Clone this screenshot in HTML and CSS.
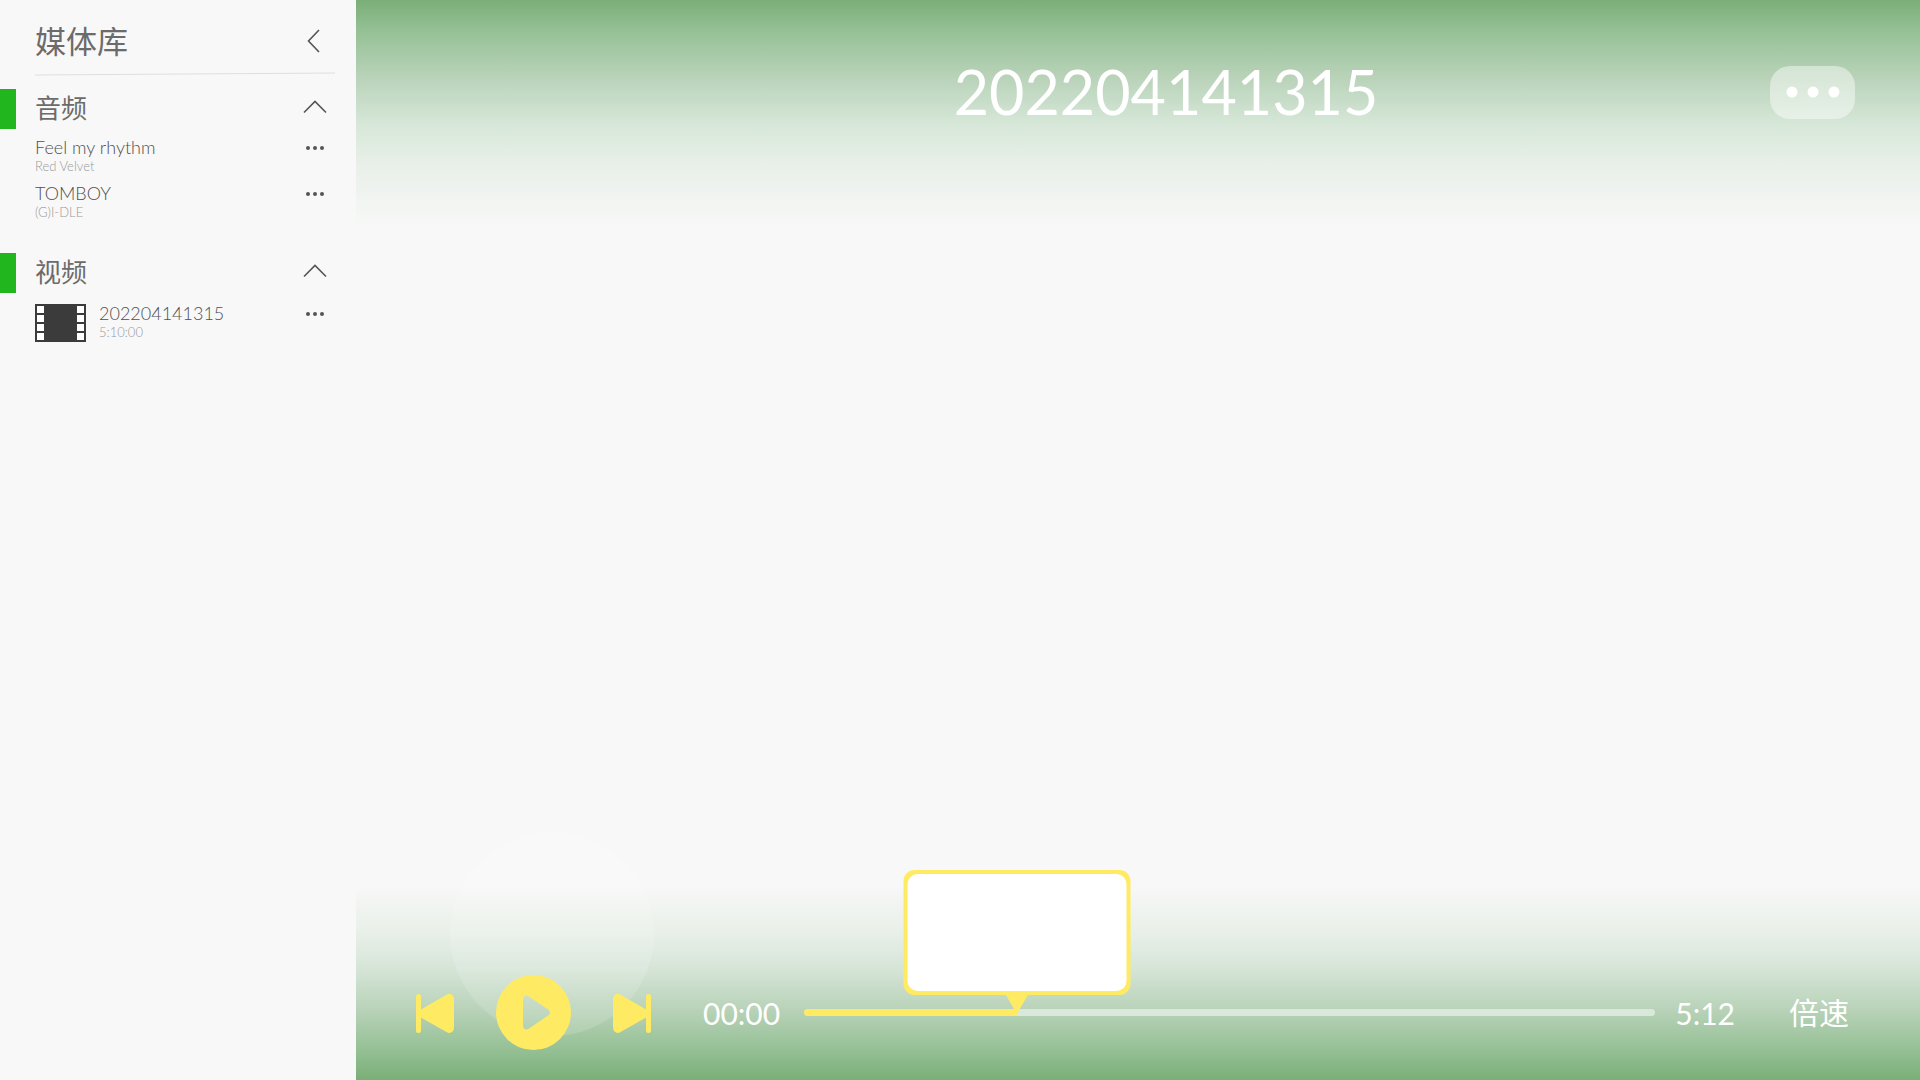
FILE: index.html
```html
<!DOCTYPE html>
<html lang="zh-CN">
<head>
<meta charset="utf-8">
<meta name="viewport" content="width=device-width, initial-scale=1">
<title>媒体库</title>
<link rel="stylesheet" href="styles.css">
</head>
<body>
<svg class="defs" aria-hidden="true">
  <symbol id="dots" viewBox="0 0 20 6"><circle cx="3" cy="3" r="2"/><circle cx="10" cy="3" r="2"/><circle cx="17" cy="3" r="2"/></symbol>
  <symbol id="up" viewBox="0 0 24 14"><path d="M1 12.5 12 1.500 23 12.5" fill="none" stroke="currentColor" stroke-width="1.600"/></symbol>
</svg>
<div class="app">
  <aside class="sidebar">
    <header class="library">
      <h2>媒体库</h2>
      <button class="icon back" aria-label="收起"><svg width="13" height="24" viewBox="0 0 13 24"><path d="M12 1 1.500 12 12 23" fill="none" stroke="currentColor" stroke-width="1.600"/></svg></button>
    </header>
    <svg class="divider" viewBox="0 0 300 4" preserveAspectRatio="none" aria-hidden="true"><path d="M0 3 300 1" stroke="#dedede" stroke-width="1"/></svg>
    <section class="group">
      <div class="group-head">
        <h3>音频</h3>
        <button class="icon" aria-label="折叠音频"><svg width="24" height="14"><use href="#up"/></svg></button>
      </div>
      <ul>
        <li>
          <div class="text"><span class="name">Feel my rhythm</span><span class="note">Red Velvet</span></div>
          <button class="icon more" aria-label="更多"><svg width="20" height="6"><use href="#dots"/></svg></button>
        </li>
        <li>
          <div class="text"><span class="name">TOMBOY</span><span class="note">(G)I-DLE</span></div>
          <button class="icon more" aria-label="更多"><svg width="20" height="6"><use href="#dots"/></svg></button>
        </li>
      </ul>
    </section>
    <section class="group videos">
      <div class="group-head">
        <h3>视频</h3>
        <button class="icon" aria-label="折叠视频"><svg width="24" height="14"><use href="#up"/></svg></button>
      </div>
      <ul>
        <li>
          <svg class="film" width="51" height="38" viewBox="0 0 51 38"><path fill="#3b3b3b" d="M0 0h51v38H0z"/><path fill="#fff" d="M2 2h7v7H2zM2 11h7v7H2zM2 20h7v7H2zM2 29h7v7H2zM42 2h7v7h-7zM42 11h7v7h-7zM42 20h7v7h-7zM42 29h7v7h-7z"/></svg>
          <div class="text"><span class="name">202204141315</span><span class="note">5:10:00</span></div>
          <button class="icon more" aria-label="更多"><svg width="20" height="6"><use href="#dots"/></svg></button>
        </li>
      </ul>
    </section>
  </aside>
  <main class="player">
    <header class="top">
      <h1>202204141315</h1>
      <button class="menu" aria-label="更多选项"><svg width="54" height="12" viewBox="0 0 54 12" fill="#fff"><circle cx="6" cy="6" r="5.500"/><circle cx="27" cy="6" r="5.500"/><circle cx="48" cy="6" r="5.500"/></svg></button>
    </header>
    <footer class="controls">
      <span class="glow"></span>
      <div class="buttons">
        <button class="icon" aria-label="上一个"><svg width="38" height="40" viewBox="0 0 38 40"><rect y="1" width="5" height="39" rx="2.500"/><path d="M4 17 31 1.500Q34-.2 36.800 2.500 38 4 38 6V34Q38 37 36.500 38.500 34 41 30.500 39L4 24Z"/></svg></button>
        <button class="icon" aria-label="播放"><svg width="75" height="75" viewBox="0 0 75 75"><path fill-rule="evenodd" d="M37.500 0a37.500 37.500 0 1 0 0 75a37.500 37.500 0 1 0 0-75ZM33 21.500 52.500 34.800Q55.500 37.500 52.500 40.200L33 53.500Q30.500 55 28.500 54 27 53 27 50.500V24.500Q27 22 28.500 21 30.500 20 33 21.500Z"/></svg></button>
        <button class="icon" aria-label="下一个"><svg width="38" height="40" viewBox="0 0 38 40"><g transform="matrix(-1 0 0 1 38 0)"><rect y="1" width="5" height="39" rx="2.500"/><path d="M4 17 31 1.500Q34-.2 36.800 2.500 38 4 38 6V34Q38 37 36.500 38.500 34 41 30.500 39L4 24Z"/></g></svg></button>
      </div>
      <span class="time elapsed">00:00</span>
      <div class="seek">
        <input type="range" min="0" max="100" value="25" aria-label="播放进度">
        <div class="preview"></div>
      </div>
      <span class="time total">5:12</span>
      <button class="speed">倍速</button>
    </footer>
  </main>
</div>
</body>
</html>
```
FILE: styles.css
```css
* { box-sizing: border-box; }
body { margin: 0; background: #f8f8f8; color: #6b6b6b; font-family: Lato, "Noto Sans CJK SC", sans-serif; }
h1, h2, h3, ul { margin: 0; padding: 0; font-weight: 400; }
button { margin: 0; padding: 0; border: 0; background: none; color: inherit; font: inherit; cursor: pointer; }
svg { display: block; }
.defs { position: absolute; width: 0; height: 0; }
.app { display: grid; grid-template-columns: 356px 1fr; min-height: 100vh; }

.library { display: flex; align-items: center; justify-content: space-between; height: 72px; padding: 10px 36px 0 35px; }
.library h2 { font-size: 31px; line-height: 48px; }
.icon { color: #555; fill: currentColor; }
.divider { width: calc(100% - 56px); height: 4px; margin-left: 35px; }
.group { padding-bottom: 24px; }
.group:first-of-type { padding-top: 13px; }
.group-head { display: flex; align-items: center; justify-content: space-between; height: 40px; padding: 0 29px 0 19px; border-left: 16px solid #22b61e; }
.group-head h3 { font-size: 26px; line-height: 38px; padding-bottom: 2px; }
.group-head .icon { margin-bottom: 5px; }
.group ul { list-style: none; padding-top: 8px; }
.group li { display: flex; align-items: flex-start; height: 46px; padding: 0 31px 0 35px; }
.text { display: flex; flex: 1; flex-direction: column; }
.name { color: #505050; font-size: 18px; font-weight: 300; line-height: 21px; }
.note { color: #999; font-size: 13px; font-weight: 300; line-height: 17px; }
.more { padding-top: 8px; }
.group.videos ul { padding-top: 10px; }
.film { margin: 1px 13px 0 0; }

.player {
  display: flex; flex-direction: column; justify-content: space-between; min-width: 0;
  background:
    linear-gradient(to bottom, #7aae77, #93bf93 28px, #b8d2b8 76px, #d6e7d8 124px, #e8efe8 162px, #f8f8f8 228px, transparent 228px),
    linear-gradient(to top, #7aae77, #93bf93 28px, #b8d2b8 70px, #d6e5d8 112px, #e8efe8 146px, #f8f8f8 196px);
}
.top { display: grid; grid-template-columns: 1fr auto 1fr; align-items: center; padding: 56px 65px 0 121px; color: #fff; }
.top h1 { grid-column: 2; font-size: 61px; line-height: 72px; }
.menu { display: flex; align-items: center; justify-content: center; justify-self: end; width: 85px; height: 53px; border-radius: 20px; background: rgba(255, 255, 255, .45); }

.controls { position: relative; display: flex; align-items: center; height: 135px; padding: 0 71px 0 60px; color: #fff; font-size: 30px; line-height: 44px; }
.glow { position: absolute; bottom: 44px; left: 94px; width: 204px; height: 204px; border-radius: 50%; background: rgba(255, 255, 255, .15); }
.buttons { position: relative; display: flex; align-items: center; gap: 42px; }
.buttons .icon { color: #ffeb63; }
.elapsed { margin: 0 24px 0 52px; }
.total { margin: 0 54px 0 20px; }
.speed { padding-bottom: 2px; }
.seek { position: relative; display: flex; flex: 1; align-items: center; }
.seek input { width: 100%; height: 7px; margin: 0; border-radius: 4px; appearance: none; background: linear-gradient(to right, #ffeb63 25%, #d9e8da 25%); }
.seek input::-webkit-slider-thumb { width: 1px; height: 7px; appearance: none; background: transparent; }
.preview { position: absolute; bottom: 21px; left: 25%; width: 227px; height: 125px; padding: 4px; border-radius: 11px; background: #ffeb63; transform: translateX(-50%); }
.preview::before { content: ""; display: block; height: 100%; border-radius: 10px; background: #fff; }
.preview::after { content: ""; position: absolute; top: 100%; left: 50%; width: 22px; height: 19px; background: #ffeb63; clip-path: polygon(0 0, 100% 0, 50% 100%); transform: translateX(-50%); }
```
